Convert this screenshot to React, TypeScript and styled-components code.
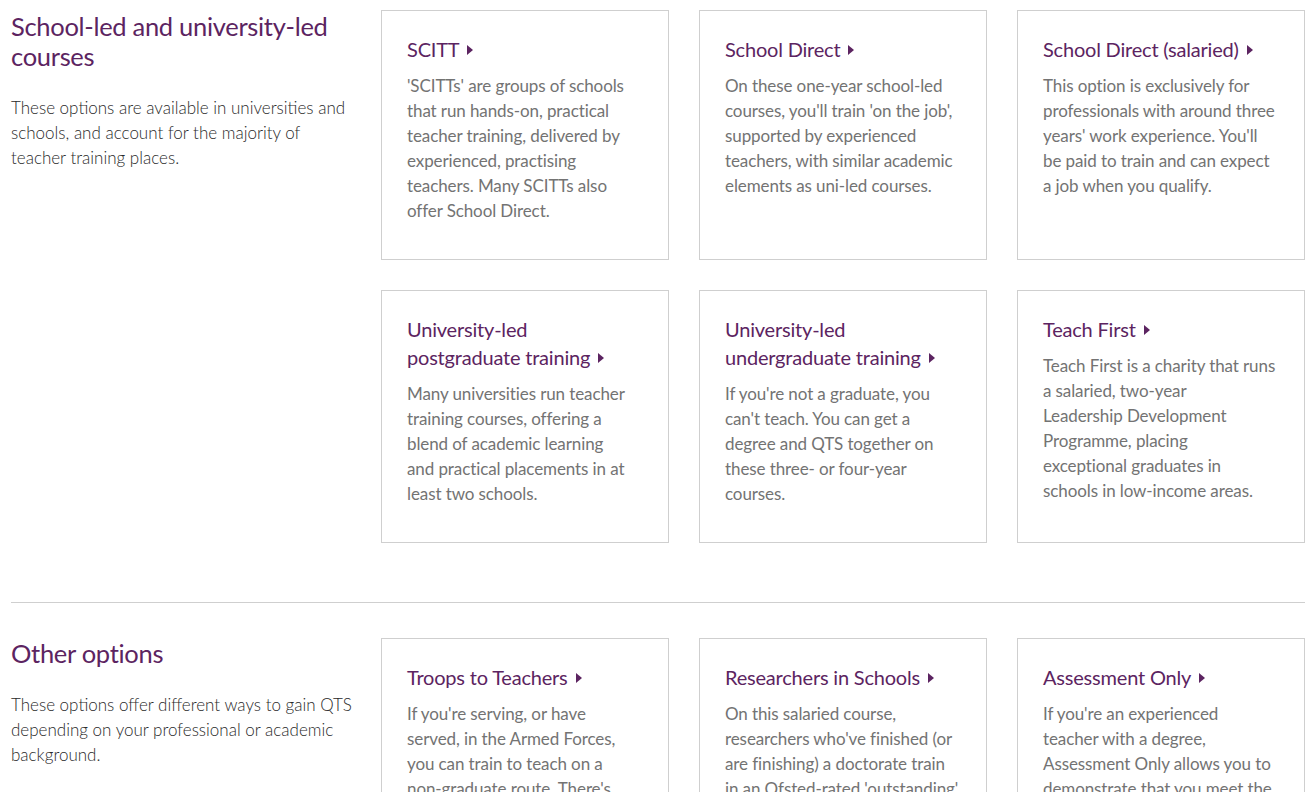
import React from "react";
import styled, { createGlobalStyle } from "styled-components";

const GlobalStyle = createGlobalStyle`
  html, body {
    margin: 0;
    padding: 0;
    background: #fff;
  }
  body {
    font-family: Lato, "Open Sans", sans-serif;
    -webkit-font-smoothing: antialiased;
  }
`;

const Page = styled.div`
  padding: 10px 10px 0 11px;
`;

const Section = styled.section`
  display: grid;
  grid-template-columns: 340px 1fr;
  column-gap: 30px;
`;

const Intro = styled.div<{ $top: number }>`
  padding-top: ${(props) => props.$top}px;
`;

const Heading = styled.h2`
  margin: 0 0 24px;
  font-family: Lato, sans-serif;
  font-weight: 400;
  font-size: 25.5px;
  line-height: 30px;
  color: #5c2461;
  letter-spacing: -0.3px;
`;

const Lead = styled.p`
  margin: 0;
  font-family: Lato, sans-serif;
  font-weight: 300;
  font-size: 17px;
  line-height: 25px;
  color: #2a2a2a;
`;

const Line = styled.span`
  display: block;
  white-space: nowrap;
`;

const Cards = styled.div`
  display: grid;
  grid-template-columns: repeat(3, 288px);
  column-gap: 30px;
  row-gap: 30px;
`;

const Card = styled.a`
  display: block;
  border: 1px solid #cfcfcf;
  padding: 24px 25px 36px;
  text-decoration: none;
  background: #fff;
`;

const CardTitle = styled.h3`
  margin: 0 0 10px;
  font-weight: 400;
  font-size: 20px;
  line-height: 28px;
  color: #5c2461;
  letter-spacing: -0.2px;
`;

const TitleEnd = styled.span`
  white-space: nowrap;
`;

const Arrow = styled.span`
  display: inline-block;
  width: 0;
  height: 0;
  margin-left: 8px;
  vertical-align: 2px;
  border-top: 5px solid transparent;
  border-bottom: 5px solid transparent;
  border-left: 6px solid #5c2461;
`;

const CardText = styled.p`
  margin: 0;
  font-size: 17px;
  line-height: 25px;
  color: #737373;
  letter-spacing: -0.1px;
`;

const Divider = styled.hr`
  margin: 59px 0 35px;
  border: 0;
  border-top: 1px solid #cfcfcf;
`;

interface Option {
  title: string;
  lines: string[];
}

const schoolLed: Option[] = [
  {
    title: "SCITT",
    lines: [
      "'SCITTs' are groups of schools",
      "that run hands-on, practical",
      "teacher training, delivered by",
      "experienced, practising",
      "teachers. Many SCITTs also",
      "offer School Direct.",
    ],
  },
  {
    title: "School Direct",
    lines: [
      "On these one-year school-led",
      "courses, you'll train 'on the job',",
      "supported by experienced",
      "teachers, with similar academic",
      "elements as uni-led courses.",
    ],
  },
  {
    title: "School Direct (salaried)",
    lines: [
      "This option is exclusively for",
      "professionals with around three",
      "years' work experience. You'll",
      "be paid to train and can expect",
      "a job when you qualify.",
    ],
  },
  {
    title: "University-led postgraduate training",
    lines: [
      "Many universities run teacher",
      "training courses, offering a",
      "blend of academic learning",
      "and practical placements in at",
      "least two schools.",
    ],
  },
  {
    title: "University-led undergraduate training",
    lines: [
      "If you're not a graduate, you",
      "can't teach. You can get a",
      "degree and QTS together on",
      "these three- or four-year",
      "courses.",
    ],
  },
  {
    title: "Teach First",
    lines: [
      "Teach First is a charity that runs",
      "a salaried, two-year",
      "Leadership Development",
      "Programme, placing",
      "exceptional graduates in",
      "schools in low-income areas.",
    ],
  },
];

const other: Option[] = [
  {
    title: "Troops to Teachers",
    lines: [
      "If you're serving, or have",
      "served, in the Armed Forces,",
      "you can train to teach on a",
      "non-graduate route. There's",
      "funding to help you train.",
    ],
  },
  {
    title: "Researchers in Schools",
    lines: [
      "On this salaried course,",
      "researchers who've finished (or",
      "are finishing) a doctorate train",
      "in an Ofsted-rated 'outstanding'",
      "school.",
    ],
  },
  {
    title: "Assessment Only",
    lines: [
      "If you're an experienced",
      "teacher with a degree,",
      "Assessment Only allows you to",
      "demonstrate that you meet the",
      "teachers' standards.",
    ],
  },
];

const OptionCard: React.FC<{ option: Option }> = ({ option }) => {
  // keep the arrow glued to the last word of the title
  const words = option.title.split(" ");
  const last = words.pop();
  return (
    <Card href="#">
      <CardTitle>
        {words.length > 0 && words.join(" ") + " "}
        <TitleEnd>
          {last}
          <Arrow />
        </TitleEnd>
      </CardTitle>
      <CardText>
        {option.lines.map((l, i) => (
          <Line key={i}>{l}</Line>
        ))}
      </CardText>
    </Card>
  );
};

const App: React.FC = () => {
  return (
    <>
      <GlobalStyle />
      <Page>
        <Section>
          <Intro $top={1}>
            <Heading>School-led and university-led courses</Heading>
            <Lead>
              <Line>These options are available in universities and</Line>
              <Line>schools, and account for the majority of</Line>
              <Line>teacher training places.</Line>
            </Lead>
          </Intro>
          <Cards>
            {schoolLed.map((o) => (
              <OptionCard key={o.title} option={o} />
            ))}
          </Cards>
        </Section>
        <Divider />
        <Section>
          <Intro $top={0}>
            <Heading>Other options</Heading>
            <Lead>
              <Line>These options offer different ways to gain QTS</Line>
              <Line>depending on your professional or academic</Line>
              <Line>background.</Line>
            </Lead>
          </Intro>
          <Cards>
            {other.map((o) => (
              <OptionCard key={o.title} option={o} />
            ))}
          </Cards>
        </Section>
      </Page>
    </>
  );
};

export default App;
